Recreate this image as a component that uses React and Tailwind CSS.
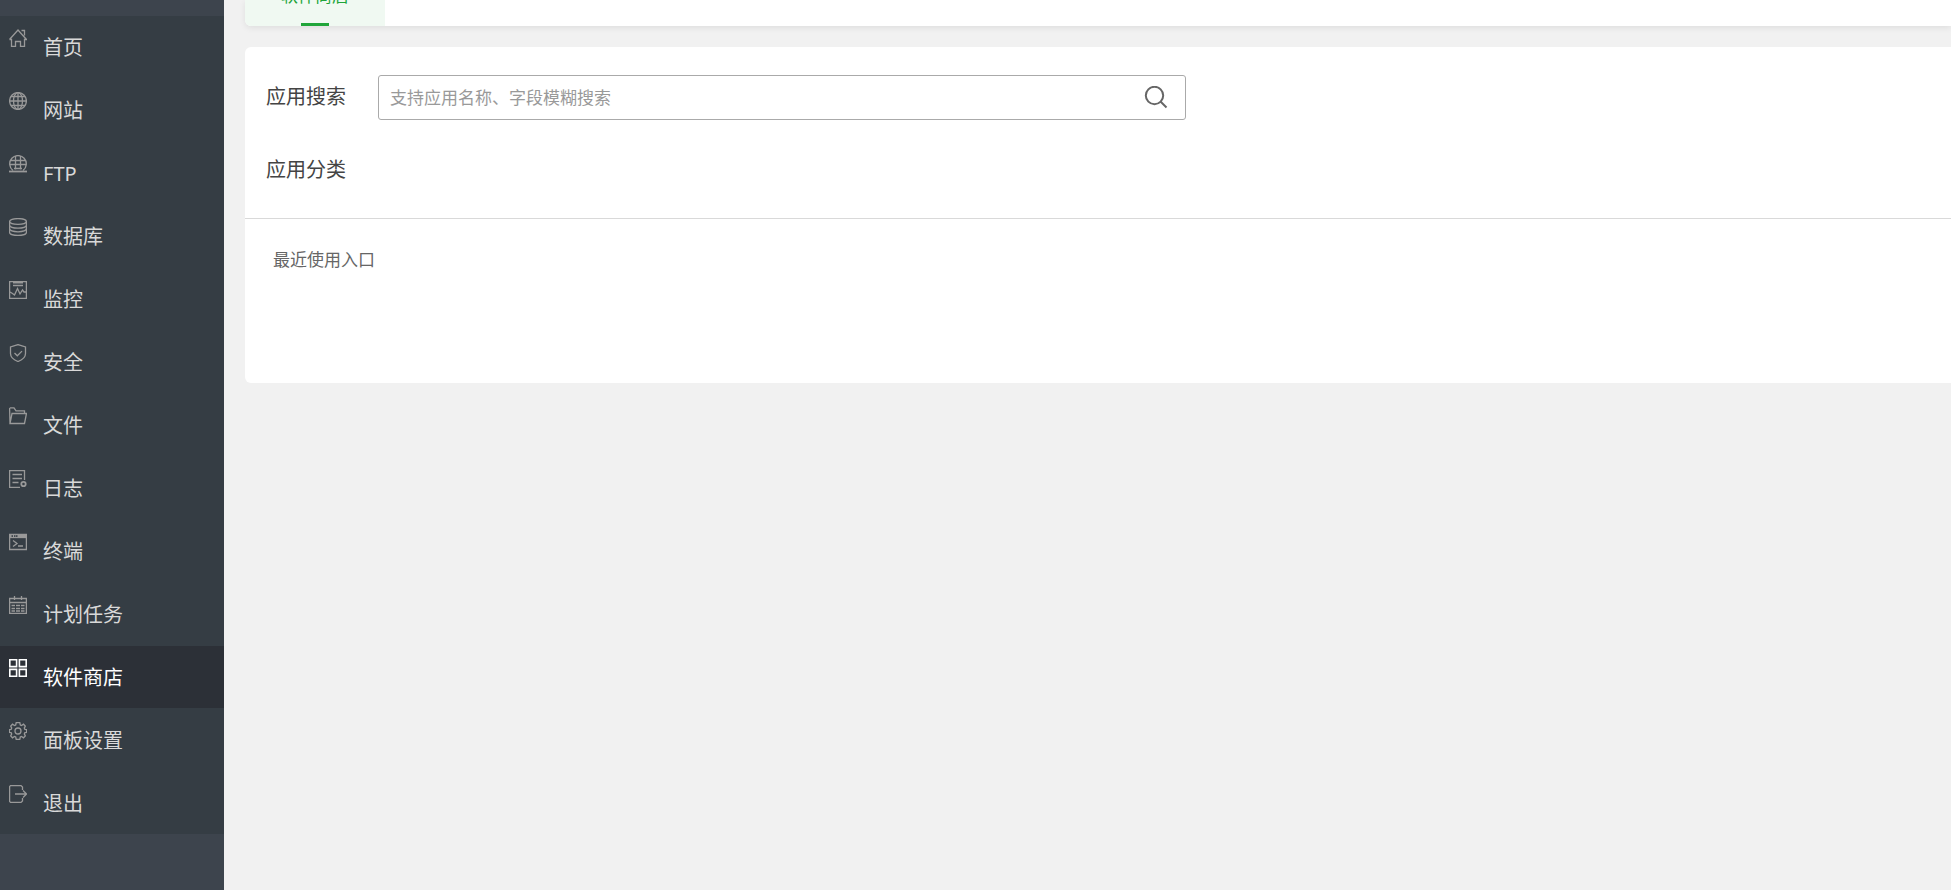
const iconProps = {
  viewBox: '0 0 18 18',
  fill: 'none',
  stroke: 'currentColor',
  strokeWidth: 1.3,
  'aria-hidden': true,
};

const HomeIcon = () => (
  <svg {...iconProps} className="w-[18px] h-[18px]">
    <path d="M0.5 10.5 9 1l8.5 9.5h-2v7h-4v-5h-5v5h-4v-7h-2M12.5 1.5h3v5" />
  </svg>
);

const GlobeIcon = () => (
  <svg {...iconProps} className="w-[18px] h-[18px]">
    <circle cx="9" cy="9" r="8.4" />
    <path d="M9 0.5v17M0.5 9h17M2 4.5h14M2 13.5h14" />
    <ellipse cx="9" cy="9" rx="4.5" ry="8.4" />
  </svg>
);

const FtpIcon = () => (
  <svg {...iconProps} className="w-[18px] h-[18px]">
    <path d="M4 15.5A8.3 8.3 0 1 1 14 15.5M0.5 9.5h17M2 5.5h14" />
    <path d="M6.5 1v13.5M11.5 1v13.5M5 13.5h8" />
    <path d="M0 16.5h18" strokeWidth="1.8" />
  </svg>
);

const DatabaseIcon = () => (
  <svg {...iconProps} className="w-[18px] h-[18px]">
    <ellipse cx="9" cy="3.5" rx="8.4" ry="2.9" />
    <path d="M0.6 3.5v11c0 1.700 3.800 3 8.400 3s8.400-1.300 8.400-3v-11" />
    <path d="M0.6 7.200c0 1.700 3.800 3 8.400 3s8.400-1.300 8.400-3M0.6 10.800c0 1.700 3.800 3 8.400 3s8.400-1.300 8.400-3" />
  </svg>
);

const MonitorIcon = () => (
  <svg {...iconProps} className="w-[18px] h-[18px]">
    <path d="M0.6 0.6h16.800v16.800H0.6z" />
    <path d="M4 1.500h10" strokeWidth="2" />
    <path d="M4 4.500h10M1 11l2.500 1.500L5.500 14 8.500 7.500l2.500 5.500 2.500-4 1.500 2H17" />
  </svg>
);

const ShieldIcon = () => (
  <svg {...iconProps} className="w-[18px] h-[18px]">
    <path d="M9 0.6 16.5 3v6.500c0 3.800-3.500 6.500-7.500 8-4-1.500-7.500-4.200-7.500-8V3zM5.500 9l2.800 2.800 4.700-4.700" />
  </svg>
);

const FolderIcon = () => (
  <svg {...iconProps} className="w-[18px] h-[18px]">
    <path d="M1 16.500 0.600 1.500 1.500 0.800H5l2 3h8.500V6M1 16.500 3 6.500h14.500L15.500 16.500z" />
  </svg>
);

const LogIcon = () => (
  <svg {...iconProps} className="w-[18px] h-[18px]">
    <path d="M15.500 10V0.600H0.600v16.800H11M3.500 4.500H13M3.500 8.500H13M3.500 12.500h6" />
    <circle cx="14.500" cy="14" r="2.200" strokeWidth="1.800" />
  </svg>
);

const TerminalIcon = () => (
  <svg {...iconProps} className="w-[18px] h-[18px]">
    <path d="M0.600 1.500h16.800v15H0.600z" />
    <path d="M1 4.500h16" />
    <path d="M1 3h1.500M4 3h1M6.500 3H7M8.500 3H17" strokeWidth="3" />
    <path d="m4 7.500 4 3-4 3M9 13h5" />
  </svg>
);

const CalendarIcon = () => (
  <svg {...iconProps} className="w-[18px] h-[18px]">
    <path d="M0.600 2.500h16.800v14.900H0.600zM0.600 6.500h16.800M5.500 0v4M12.500 0v4" />
    <path d="M2.500 9.500H6M7 9.500h4M12 9.500h3.500M2.500 12.500H6M7 12.500h4M12 12.500h3.500M2.500 15H6M7 15h4M12 15h3.500" />
  </svg>
);

const AppsIcon = () => (
  <svg {...iconProps} strokeWidth="1.6" className="w-[18px] h-[18px]">
    <path d="M0.800 0.800h6.800v6.800H0.800zM10.400 0.800h6.800v6.800h-6.800zM0.800 10.400h6.800v6.800H0.800zM10.400 10.400h6.800v6.800h-6.800z" />
  </svg>
);

const GearIcon = () => (
  <svg {...iconProps} className="w-[18px] h-[18px]">
    <path d="M7.200 0.700h3.600l.5 2.300 1.200.5 2-1.300 1.800 1.900-1 2 .6 1.200 1.700.3v2.800l-1.700.3-.6 1.200 1 2-1.800 1.900-2-1.300-1.200.5-.5 2.300H7.200L6.700 15l-1.200-.5-2 1.300-1.800-1.900 1-2-.6-1.200-1.700-.3V7.600l1.700-.3.6-1.200-1-2 1.800-1.900 2 1.300L6.700 3z" />
    <circle cx="9" cy="9" r="3" />
  </svg>
);

const ExitIcon = () => (
  <svg {...iconProps} className="w-[18px] h-[18px]">
    <path d="M13.500 5V2L12 0.600H1.600l-1 1v14.800l1 1H12l1.500-1.400v-3M6 9h11M14 5.500 17.500 9 14 12.500" />
  </svg>
);

const menuItems = [
  { id: 'home', label: '首页', icon: HomeIcon },
  { id: 'site', label: '网站', icon: GlobeIcon },
  { id: 'ftp', label: 'FTP', icon: FtpIcon },
  { id: 'database', label: '数据库', icon: DatabaseIcon },
  { id: 'control', label: '监控', icon: MonitorIcon },
  { id: 'firewall', label: '安全', icon: ShieldIcon },
  { id: 'files', label: '文件', icon: FolderIcon },
  { id: 'logs', label: '日志', icon: LogIcon },
  { id: 'xterm', label: '终端', icon: TerminalIcon },
  { id: 'crontab', label: '计划任务', icon: CalendarIcon },
  { id: 'soft', label: '软件商店', icon: AppsIcon },
  { id: 'config', label: '面板设置', icon: GearIcon },
  { id: 'logout', label: '退出', icon: ExitIcon },
];

const Sidebar = ({ current }) => (
  <aside className="w-56 shrink-0 bg-[#3d444d] pt-4">
    <nav className="bg-[#353d44]">
      <ul className="flex flex-col gap-px">
        {menuItems.map(({ id, label, icon: Icon }) => (
          <li key={id}>
            <a
              href={`#${id}`}
              className={`flex h-[62px] items-start gap-4 pl-[9px] ${
                id === current ? 'bg-[#2c3037] text-white' : 'text-[#d9d9d9]'
              }`}
            >
              <span className={`pt-[13px] ${id === current ? 'text-white' : 'text-[#999999]'}`}>
                <Icon />
              </span>
              <span className="text-xl leading-[64px]">{label}</span>
            </a>
          </li>
        ))}
      </ul>
    </nav>
  </aside>
);

const SearchBox = () => (
  <div className="flex h-[45px] w-[808px] items-center rounded-[3px] border border-[#aaaaaa] bg-white">
    <input
      id="app-search"
      type="text"
      placeholder="支持应用名称、字段模糊搜索"
      className="h-full min-w-0 flex-1 pl-[11px] text-[17px] text-[#555555] outline-none placeholder:text-[#999999]"
    />
    <button type="button" aria-label="搜索" className="mr-[17px] text-[#666666]">
      <svg className="h-6 w-6" viewBox="0 0 24 24" fill="none" stroke="currentColor" strokeWidth="2">
        <circle cx="10.5" cy="9.5" r="8.7" />
        <path d="m16.500 15.500 6 6" />
      </svg>
    </button>
  </div>
);

export default function App() {
  return (
    <div className="flex min-h-screen bg-[#f1f1f1] font-['Noto_Sans','Noto_Sans_CJK_SC',sans-serif]">
      <Sidebar current="soft" />

      <main className="min-w-0 flex-1 pl-[21px]">
        {/* Tabs */}
        <div className="flex h-[26px] items-end rounded-bl-md bg-white shadow-[0_2px_6px_rgba(0,0,0,0.08)]">
          <button
            type="button"
            className="flex h-[26px] w-[140px] flex-col items-center justify-end overflow-hidden rounded-bl-md bg-[#f0f9f2] text-[17px] leading-6 text-[#20a53a]"
          >
            <span className="shrink-0 pb-[15px]">软件商店</span>
            <span className="h-[3px] w-7 shrink-0 bg-[#20a53a]" />
          </button>
        </div>

        {/* App store */}
        <section className="mt-[21px] rounded-l-md bg-white">
          <div className="border-b border-[#d9d9d9] px-[21px] pt-7 pb-8 text-xl text-[#444444]">
            <div className="flex items-start">
              <label htmlFor="app-search" className="w-28 shrink-0 leading-[43px]">应用搜索</label>
              <SearchBox />
            </div>
            <h2 className="mt-[34px] leading-8">应用分类</h2>
          </div>
          <div className="h-[164px] px-7 pt-[29px]">
            <h3 className="text-[17px] leading-6 text-[#666666]">最近使用入口</h3>
          </div>
        </section>
      </main>
    </div>
  );
}
